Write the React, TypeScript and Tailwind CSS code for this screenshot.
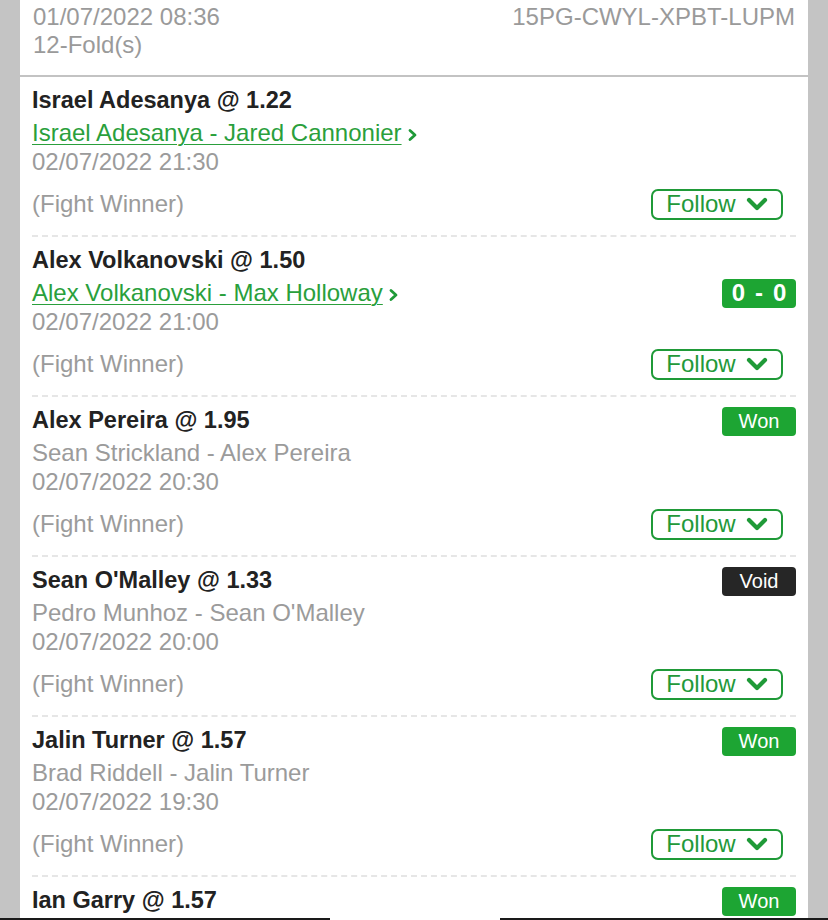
import React from "react";

type Leg = {
  pick: string;
  event?: string;
  live?: boolean;
  date?: string;
  badge?: "won" | "void" | "score";
};

const legs: Leg[] = [
  { pick: "Israel Adesanya @ 1.22", event: "Israel Adesanya - Jared Cannonier", live: true, date: "02/07/2022 21:30" },
  { pick: "Alex Volkanovski @ 1.50", event: "Alex Volkanovski - Max Holloway", live: true, date: "02/07/2022 21:00", badge: "score" },
  { pick: "Alex Pereira @ 1.95", event: "Sean Strickland - Alex Pereira", date: "02/07/2022 20:30", badge: "won" },
  { pick: "Sean O'Malley @ 1.33", event: "Pedro Munhoz - Sean O'Malley", date: "02/07/2022 20:00", badge: "void" },
  { pick: "Jalin Turner @ 1.57", event: "Brad Riddell - Jalin Turner", date: "02/07/2022 19:30", badge: "won" },
  // last leg is cut off by the bottom of the screen
  { pick: "Ian Garry @ 1.57", badge: "won" },
];

function Chevron() {
  return (
    <svg width="22" height="14" viewBox="0 0 22 14" className="ml-[10px]">
      <path d="M3 3 L11 11 L19 3" fill="none" stroke="#1f9a38" strokeWidth="4.2" strokeLinecap="round" strokeLinejoin="round" />
    </svg>
  );
}

function StatusBadge({ kind }: { kind: "won" | "void" }) {
  const bg = kind === "won" ? "bg-[#1da533]" : "bg-[#262626]";
  return (
    <span className={`flex h-[29px] w-[74px] items-center justify-center rounded-[4px] text-[20px] text-white ${bg}`}>
      {kind === "won" ? "Won" : "Void"}
    </span>
  );
}

function LegRow({ leg }: { leg: Leg }) {
  return (
    <div className="pt-[8px]">
      <div className="flex h-[32px] items-center justify-between">
        <span className="text-[23.5px] font-bold text-[#222]">{leg.pick}</span>
        {(leg.badge === "won" || leg.badge === "void") && <StatusBadge kind={leg.badge} />}
      </div>
      {leg.event && (
        <>
          <div className="flex h-[30px] items-center justify-between pt-[2px]">
            {leg.live ? (
              <span className="flex items-center text-[#2a9f3c]">
                <span className="underline decoration-1 underline-offset-[3px]">{leg.event}</span>
                <svg width="14" height="14" viewBox="0 0 14 14" className="ml-[4px] mt-[4px]">
                  <path d="M4 2.5 L9 7 L4 11.5" fill="none" stroke="#1f9a38" strokeWidth="2.8" strokeLinecap="round" strokeLinejoin="round" />
                </svg>
              </span>
            ) : (
              <span className="text-[#9b9b9b]">{leg.event}</span>
            )}
            {leg.badge === "score" && (
              <span className="flex h-[29px] w-[74px] items-center justify-center gap-[10px] rounded-[4px] bg-[#1da533] text-[24px] font-bold text-white">
                <span>0</span>
                <span>-</span>
                <span>0</span>
              </span>
            )}
          </div>
          <div className="h-[30px] leading-[30px] text-[#9b9b9b]">{leg.date}</div>
          <div className="mt-[11px] flex h-[32px] items-center justify-between">
            <span className="text-[#9b9b9b]">(Fight Winner)</span>
            <button className="mr-[13px] flex h-[31px] w-[132px] items-center justify-center rounded-[7px] border-2 border-[#1f9a38] text-[24px] text-[#23993a]">
              Follow
              <Chevron />
            </button>
          </div>
          <div className="mt-[15px] border-t-2 border-dashed border-[#e6e6e6]" />
        </>
      )}
    </div>
  );
}

export default function App() {
  return (
    <div
      className="relative h-[920px] overflow-hidden bg-[#c4c4c4] px-[20px]"
      style={{ fontFamily: '"Liberation Sans", Arial, sans-serif' }}
    >
      <div className="h-full bg-white text-[24px]">
        <div className="px-[13px] pb-[16px] pt-[3px] leading-[28px] text-[#9a9a9a]">
          <div className="flex justify-between">
            <span>01/07/2022 08:36</span>
            <span>15PG-CWYL-XPBT-LUPM</span>
          </div>
          <div>12-Fold(s)</div>
        </div>
        <div className="h-[2px] bg-[#c3c3c3]" />
        <div className="px-[12px]">
          {legs.map((leg) => (
            <LegRow key={leg.pick} leg={leg} />
          ))}
        </div>
      </div>
      <div className="absolute bottom-0 left-0 h-[2px] w-[330px] bg-[#1a1a1a]" />
      <div className="absolute bottom-0 right-0 h-[2px] w-[328px] bg-[#1a1a1a]" />
    </div>
  );
}
